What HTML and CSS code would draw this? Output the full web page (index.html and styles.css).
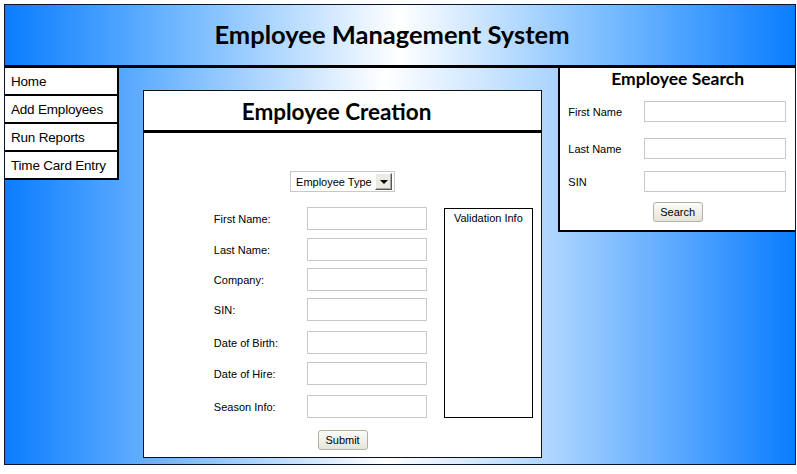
FILE: index.html
```html
<!DOCTYPE html>
<html>
<head>
<meta charset="utf-8">
<link rel="stylesheet" href="styles.css">
</head>
<body>
<div class="frame">
  <header class="header"><h1 class="title">Employee Management System</h1></header>
  <div class="main">
    <nav class="nav">
      <div class="nav-item">Home</div>
      <div class="nav-item">Add Employees</div>
      <div class="nav-item">Run Reports</div>
      <div class="nav-item">Time Card Entry</div>
    </nav>
    <section class="creation">
      <h2 class="creation-title">Employee Creation</h2>
      <div class="creation-body">
        <div class="select">
          <span class="select-text">Employee Type</span>
          <span class="select-btn"><span class="tri"></span></span>
        </div>
        <div class="form-area">
          <div class="fields">
            <div class="row mb8"><label class="lbl">First Name:</label><div class="input"></div></div>
            <div class="row mb7"><label class="lbl">Last Name:</label><div class="input"></div></div>
            <div class="row mb7"><label class="lbl">Company:</label><div class="input"></div></div>
            <div class="row mb10"><label class="lbl">SIN:</label><div class="input"></div></div>
            <div class="row mb8"><label class="lbl">Date of Birth:</label><div class="input"></div></div>
            <div class="row mb10"><label class="lbl">Date of Hire:</label><div class="input"></div></div>
            <div class="row"><label class="lbl">Season Info:</label><div class="input"></div></div>
          </div>
          <div class="validation">Validation Info</div>
        </div>
        <div class="submit-wrap"><button class="btn btn-submit">Submit</button></div>
      </div>
    </section>
    <aside class="search">
      <h3 class="search-title">Employee Search</h3>
      <div class="srow s1"><span class="slbl">First Name</span><div class="sinput"></div></div>
      <div class="srow s2"><span class="slbl">Last Name</span><div class="sinput"></div></div>
      <div class="srow s3"><span class="slbl">SIN</span><div class="sinput"></div></div>
      <div class="search-btn-wrap"><button class="btn btn-search">Search</button></div>
    </aside>
  </div>
</div>
</body>
</html>
```

FILE: styles.css
```css
* { box-sizing: border-box; }
html, body { margin: 0; padding: 0; background: #fff; }
body { font-family: "Liberation Sans", Arial, sans-serif; color: #000; }

.frame {
  margin: 4px 0 0 4px;
  width: 792px;
  height: 461px;
  border: 1px solid #0a1430;
  background: linear-gradient(to right, #0a7dff 0%, #b7dcff 45%, #ffffff 50%, #b7dcff 62%, #0a7dff 100%);
  display: flex;
  flex-direction: column;
}

.header {
  height: 63px;
  border-bottom: 3px solid #000;
  background: linear-gradient(to right, #0a7dff 0%, #7fbfff 25%, #ffffff 50%, #7fbfff 75%, #0a7dff 100%);
  display: flex;
  align-items: center;
  justify-content: center;
  padding: 0 16px 3px 0;
}
.title {
  margin: 0;
  font-family: "Lato", "Open Sans", sans-serif;
  font-weight: 700;
  font-size: 25.5px;
}

.main {
  flex: 1;
  display: flex;
  align-items: flex-start;
  background: linear-gradient(to right, #0a7dff 0%, #6fb5ff 20%, #ffffff 48%, #a9d3ff 70%, #0a7dff 100%);
}

.nav {
  width: 114px;
  border-right: 2px solid #000;
  background: #fff;
}
.nav-item {
  height: 28px;
  border-bottom: 2px solid #000;
  font-size: 13.5px;
  padding: 6px 0 0 6px;
  letter-spacing: -0.2px;
}

.creation {
  margin: 22px 0 0 24px;
  width: 400px;
  height: 368px;
  border: 1px solid #111;
  background: #fff;
}
.creation-title {
  margin: 0;
  height: 42px;
  border-bottom: 3px solid #000;
  font-family: "Lato", "Open Sans", sans-serif;
  font-weight: 700;
  font-size: 22.5px;
  text-align: center;
  padding: 7px 12px 0 0;
}
.creation-body {
  padding-top: 38px;
  font-size: 11px;
}

.select {
  margin: 0 auto;
  width: 105px;
  height: 21px;
  border: 1px solid #c8c8c8;
  display: flex;
  align-items: center;
  justify-content: space-between;
  padding: 0 2px 0 5px;
}
.select-btn {
  width: 17px;
  height: 17px;
  background: #ecebe3;
  border: 1px solid;
  border-color: #fff #555 #555 #fff;
  box-shadow: inset -1px -1px 0 #aaa;
  display: flex;
  align-items: center;
  justify-content: center;
}
.tri {
  width: 0; height: 0;
  border-left: 4px solid transparent;
  border-right: 4px solid transparent;
  border-top: 4px solid #000;
}

.form-area {
  display: flex;
  padding-left: 70px;
  margin-top: 15px;
}
.fields { width: 213px; }
.row {
  display: flex;
  align-items: center;
  height: 23px;
}
.mb7 { margin-bottom: 7px; }
.mb8 { margin-bottom: 8px; }
.mb10 { margin-bottom: 10px; }
.lbl { width: 93px; }
.input {
  width: 120px;
  height: 23px;
  border: 1px solid #c8c8c8;
}
.validation {
  margin: 1px 0 0 17px;
  width: 89px;
  height: 210px;
  border: 1px solid #000;
  text-align: center;
  padding-top: 3px;
}

.submit-wrap { text-align: center; margin-top: 12px; }
.btn {
  font-family: "Liberation Sans", Arial, sans-serif;
  font-size: 11px;
  height: 20px;
  padding: 0;
  border: 1px solid #b0b0a8;
  border-radius: 3px;
  background: linear-gradient(#fbfbf8, #e6e5da);
  color: #000;
}
.btn-submit { width: 50px; }
.btn-search { width: 50px; }

.search {
  margin-left: 16px;
  width: 237px;
  height: 164px;
  background: #fff;
  border-left: 2px solid #000;
  border-bottom: 2px solid #000;
  font-size: 11px;
  padding: 0 8px 0 8px;
}
.search-title {
  margin: 0;
  text-align: center;
  font-family: "Lato", "Open Sans", sans-serif;
  font-weight: 700;
  font-size: 17.5px;
  height: 33px;
  line-height: 22px;
}
.srow { display: flex; align-items: center; }
.s1 { margin-top: 0; }
.s2 { margin-top: 16px; }
.s3 { margin-top: 12px; }
.slbl { width: 76px; }
.sinput {
  width: 142px;
  height: 21px;
  border: 1px solid #c8c8c8;
}
.search-btn-wrap { text-align: center; margin-top: 10px; }
```
